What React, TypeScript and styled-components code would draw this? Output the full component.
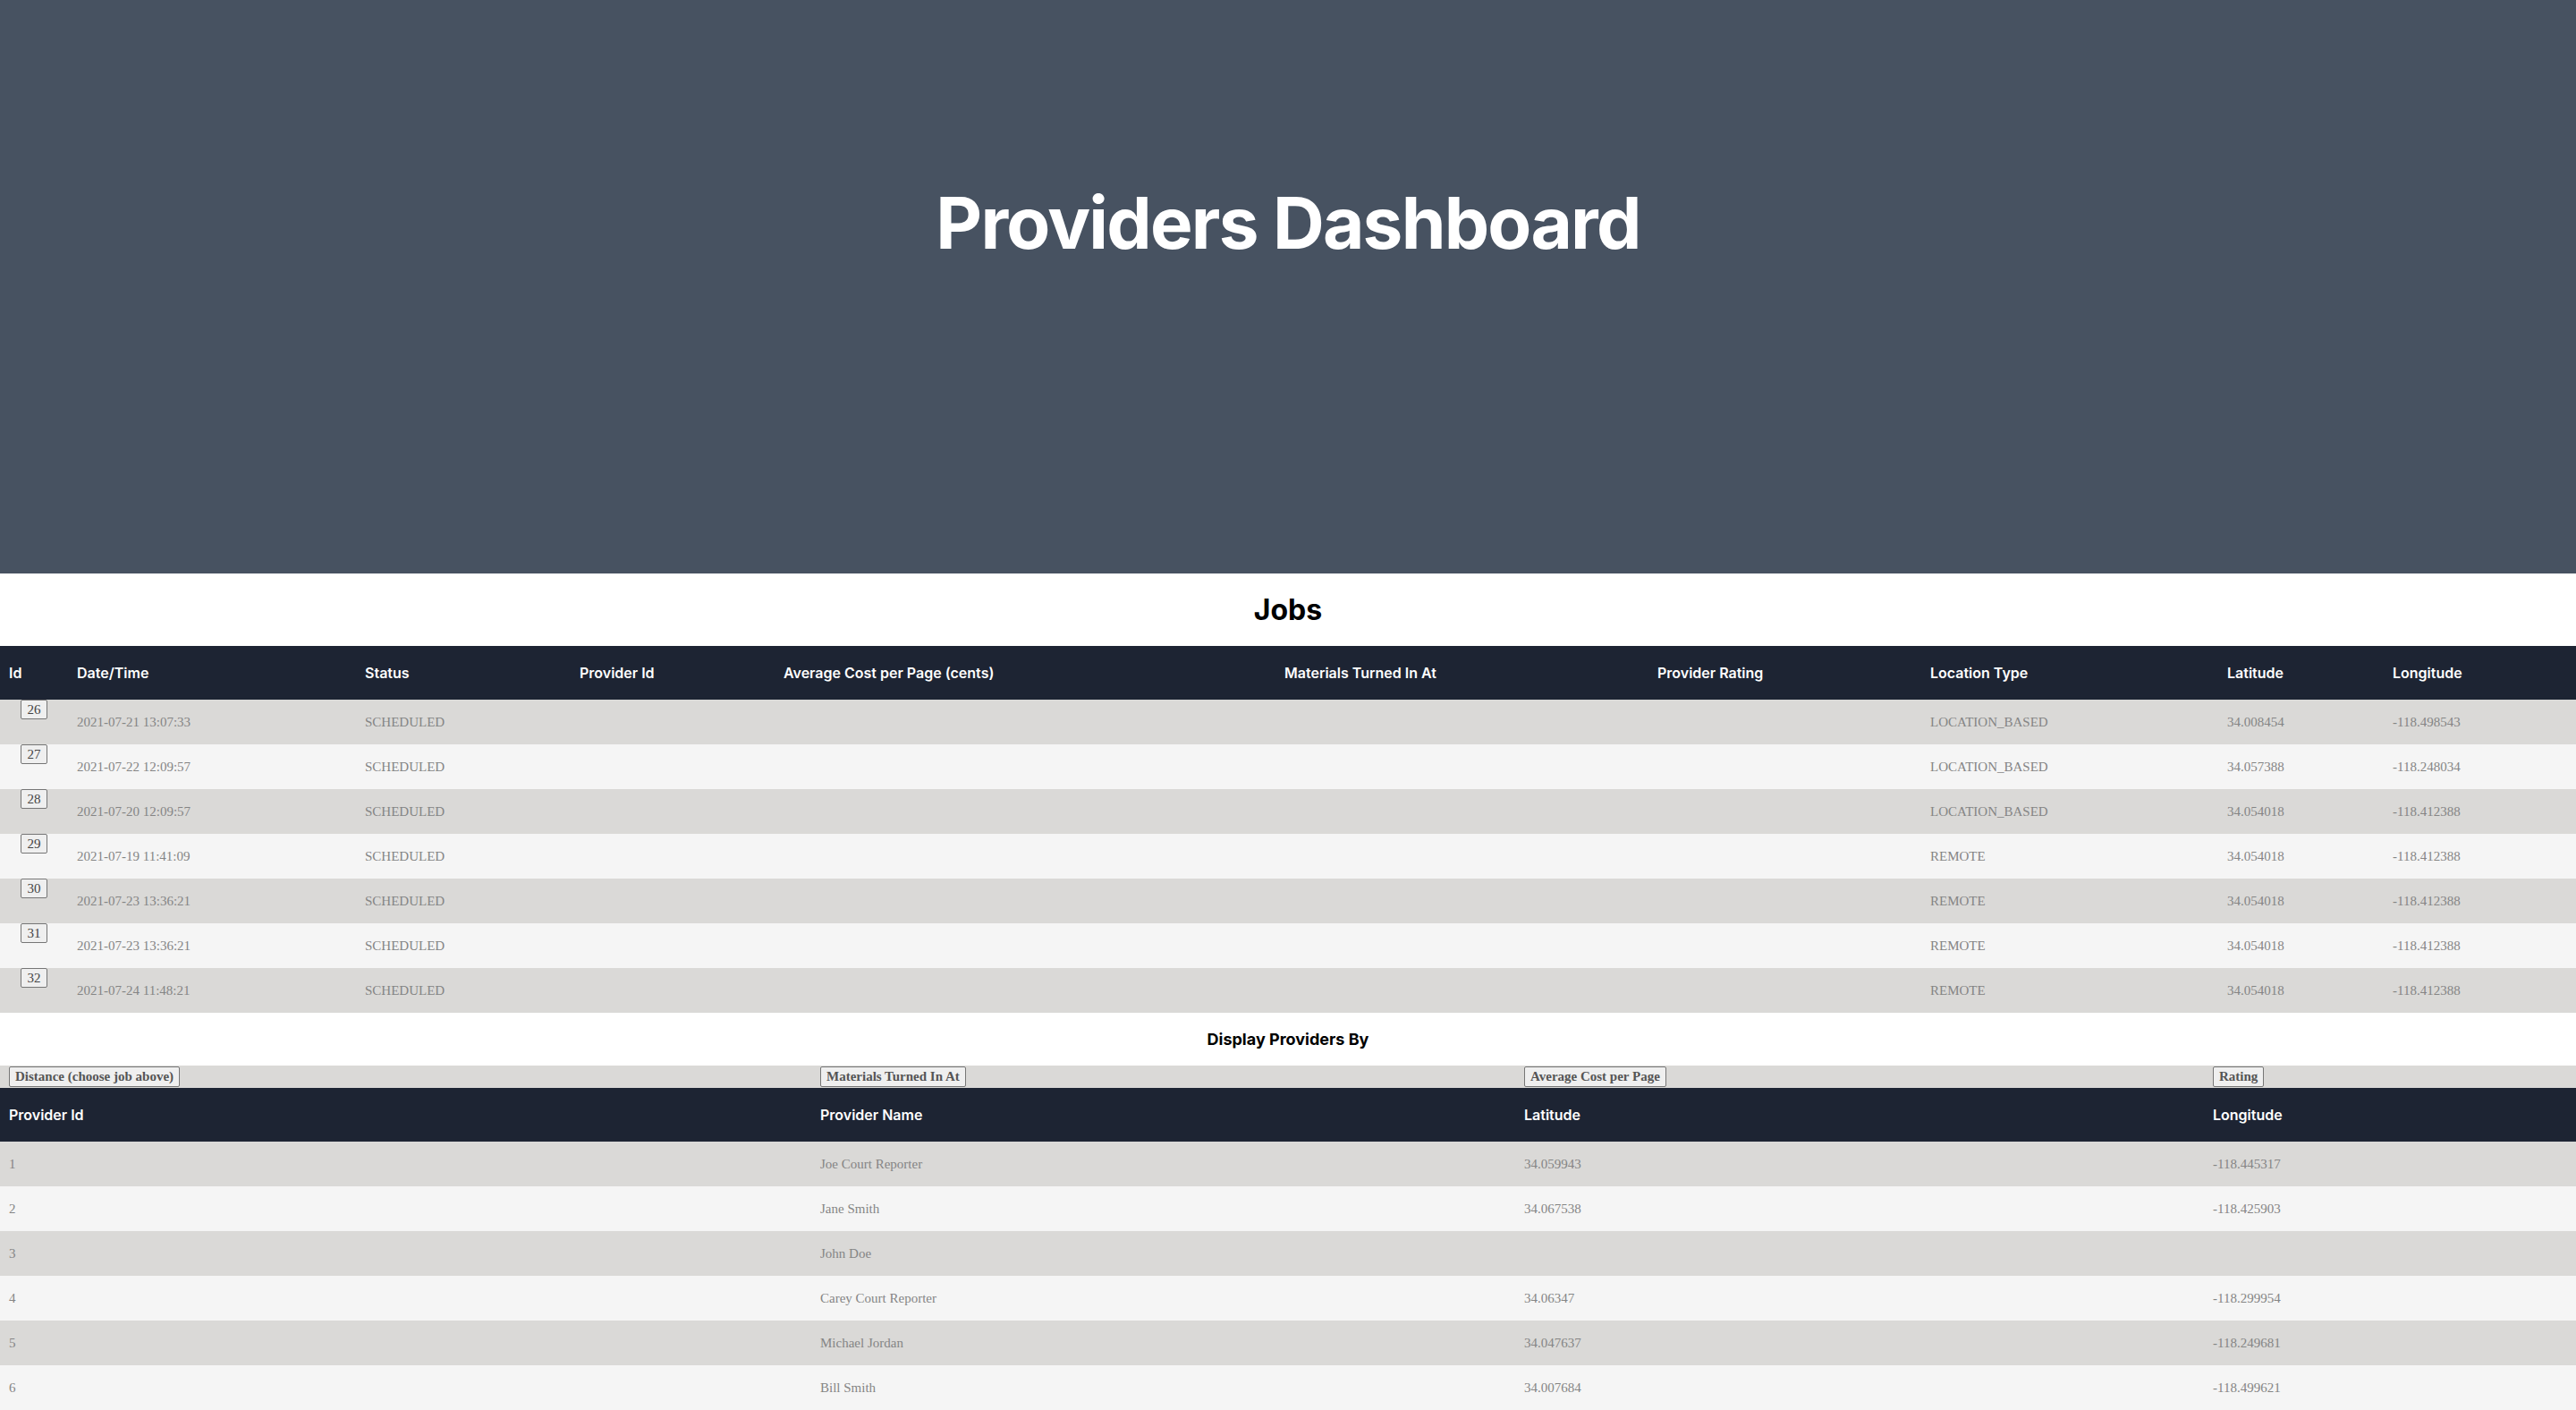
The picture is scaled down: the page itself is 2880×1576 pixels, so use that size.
import * as React from "react";
import styled, { createGlobalStyle } from "styled-components";

const GlobalStyle = createGlobalStyle`
  body {
    margin: 0;
    background: #ffffff;
    font-family: "Liberation Serif", "Times New Roman", serif;
  }
`;

const Hero = styled.header`
  height: 641px;
  box-sizing: border-box;
  padding-top: 209px;
  background: #475261;
  text-align: center;
`;

const Title = styled.h1`
  margin: 0;
  font-family: Inter, "Liberation Sans", sans-serif;
  font-size: 80px;
  line-height: 1;
  font-weight: 700;
  letter-spacing: -0.022em;
  color: #ffffff;
`;

const SectionTitle = styled.h2<{ $size: number; $height: number }>`
  margin: 0;
  height: ${p => p.$height}px;
  display: flex;
  align-items: center;
  justify-content: center;
  font-family: Inter, "Liberation Sans", sans-serif;
  font-size: ${p => p.$size}px;
  font-weight: 700;
  color: #000000;
`;

const Table = styled.table`
  width: 100%;
  border-collapse: collapse;
  table-layout: fixed;
`;

const HeadRow = styled.tr`
  height: 60px;
  background: #1d2433;
`;

const Th = styled.th`
  padding: 0 10px;
  text-align: left;
  font-family: Inter, "Liberation Sans", sans-serif;
  font-size: 16px;
  font-weight: 600;
  color: #ffffff;
`;

const SortRow = styled.tr`
  height: 25px;
  background: #dad9d7;
`;

const SortCell = styled.th`
  padding: 1px 10px 0;
  text-align: left;
  vertical-align: top;
`;

const SortButton = styled.button`
  height: 23px;
  padding: 0 6px;
  background: #efefef;
  border: 1px solid #767676;
  border-radius: 2px;
  font-family: "Liberation Serif", "Times New Roman", serif;
  font-size: 15px;
  font-weight: 700;
  color: #555555;
`;

const Row = styled.tr<{ $odd: boolean }>`
  height: 50px;
  background: ${p => (p.$odd ? "#dad9d7" : "#f5f5f5")};
`;

const Td = styled.td`
  padding: 0 10px;
  font-size: 15px;
  color: #858585;
  white-space: nowrap;
`;

const IdCell = styled.td`
  padding: 0;
  text-align: center;
  vertical-align: top;
`;

const IdButton = styled.button`
  width: 30px;
  height: 22px;
  padding: 0;
  background: #efefef;
  border: 1px solid #767676;
  border-radius: 2px;
  font-family: "Liberation Serif", "Times New Roman", serif;
  font-size: 15px;
  color: #444444;
`;

const jobColumns = [
  { label: "Id", width: 76 },
  { label: "Date/Time", width: 322 },
  { label: "Status", width: 240 },
  { label: "Provider Id", width: 228 },
  { label: "Average Cost per Page (cents)", width: 560 },
  { label: "Materials Turned In At", width: 417 },
  { label: "Provider Rating", width: 305 },
  { label: "Location Type", width: 332 },
  { label: "Latitude", width: 185 },
  { label: "Longitude", width: 215 },
];

const jobs = [
  { id: 26, date: "2021-07-21 13:07:33", type: "LOCATION_BASED", lat: "34.008454", lng: "-118.498543" },
  { id: 27, date: "2021-07-22 12:09:57", type: "LOCATION_BASED", lat: "34.057388", lng: "-118.248034" },
  { id: 28, date: "2021-07-20 12:09:57", type: "LOCATION_BASED", lat: "34.054018", lng: "-118.412388" },
  { id: 29, date: "2021-07-19 11:41:09", type: "REMOTE", lat: "34.054018", lng: "-118.412388" },
  { id: 30, date: "2021-07-23 13:36:21", type: "REMOTE", lat: "34.054018", lng: "-118.412388" },
  { id: 31, date: "2021-07-23 13:36:21", type: "REMOTE", lat: "34.054018", lng: "-118.412388" },
  { id: 32, date: "2021-07-24 11:48:21", type: "REMOTE", lat: "34.054018", lng: "-118.412388" },
];

const providerColumns = [
  { label: "Provider Id", sort: "Distance (choose job above)", width: 907 },
  { label: "Provider Name", sort: "Materials Turned In At", width: 787 },
  { label: "Latitude", sort: "Average Cost per Page", width: 770 },
  { label: "Longitude", sort: "Rating", width: 416 },
];

const providers = [
  { id: 1, name: "Joe Court Reporter", lat: "34.059943", lng: "-118.445317" },
  { id: 2, name: "Jane Smith", lat: "34.067538", lng: "-118.425903" },
  { id: 3, name: "John Doe", lat: "", lng: "" },
  { id: 4, name: "Carey Court Reporter", lat: "34.06347", lng: "-118.299954" },
  { id: 5, name: "Michael Jordan", lat: "34.047637", lng: "-118.249681" },
  { id: 6, name: "Bill Smith", lat: "34.007684", lng: "-118.499621" },
];

const App: React.FC = () => {
  return (
    <>
      <GlobalStyle />
      <Hero>
        <Title>Providers Dashboard</Title>
      </Hero>

      <SectionTitle $size={32} $height={81}>
        Jobs
      </SectionTitle>
      <Table>
        <colgroup>
          {jobColumns.map(c => (
            <col key={c.label} style={{ width: c.width }} />
          ))}
        </colgroup>
        <thead>
          <HeadRow>
            {jobColumns.map(c => (
              <Th key={c.label}>{c.label}</Th>
            ))}
          </HeadRow>
        </thead>
        <tbody>
          {jobs.map((job, i) => (
            <Row key={job.id} $odd={i % 2 === 0}>
              <IdCell>
                <IdButton>{job.id}</IdButton>
              </IdCell>
              <Td>{job.date}</Td>
              <Td>SCHEDULED</Td>
              <Td />
              <Td />
              <Td />
              <Td />
              <Td>{job.type}</Td>
              <Td>{job.lat}</Td>
              <Td>{job.lng}</Td>
            </Row>
          ))}
        </tbody>
      </Table>

      <SectionTitle $size={18} $height={59}>
        Display Providers By
      </SectionTitle>
      <Table>
        <colgroup>
          {providerColumns.map(c => (
            <col key={c.label} style={{ width: c.width }} />
          ))}
        </colgroup>
        <thead>
          <SortRow>
            {providerColumns.map(c => (
              <SortCell key={c.sort}>
                <SortButton>{c.sort}</SortButton>
              </SortCell>
            ))}
          </SortRow>
          <HeadRow>
            {providerColumns.map(c => (
              <Th key={c.label}>{c.label}</Th>
            ))}
          </HeadRow>
        </thead>
        <tbody>
          {providers.map((p, i) => (
            <Row key={p.id} $odd={i % 2 === 0}>
              <Td>{p.id}</Td>
              <Td>{p.name}</Td>
              <Td>{p.lat}</Td>
              <Td>{p.lng}</Td>
            </Row>
          ))}
        </tbody>
      </Table>
    </>
  );
};

export default App;
